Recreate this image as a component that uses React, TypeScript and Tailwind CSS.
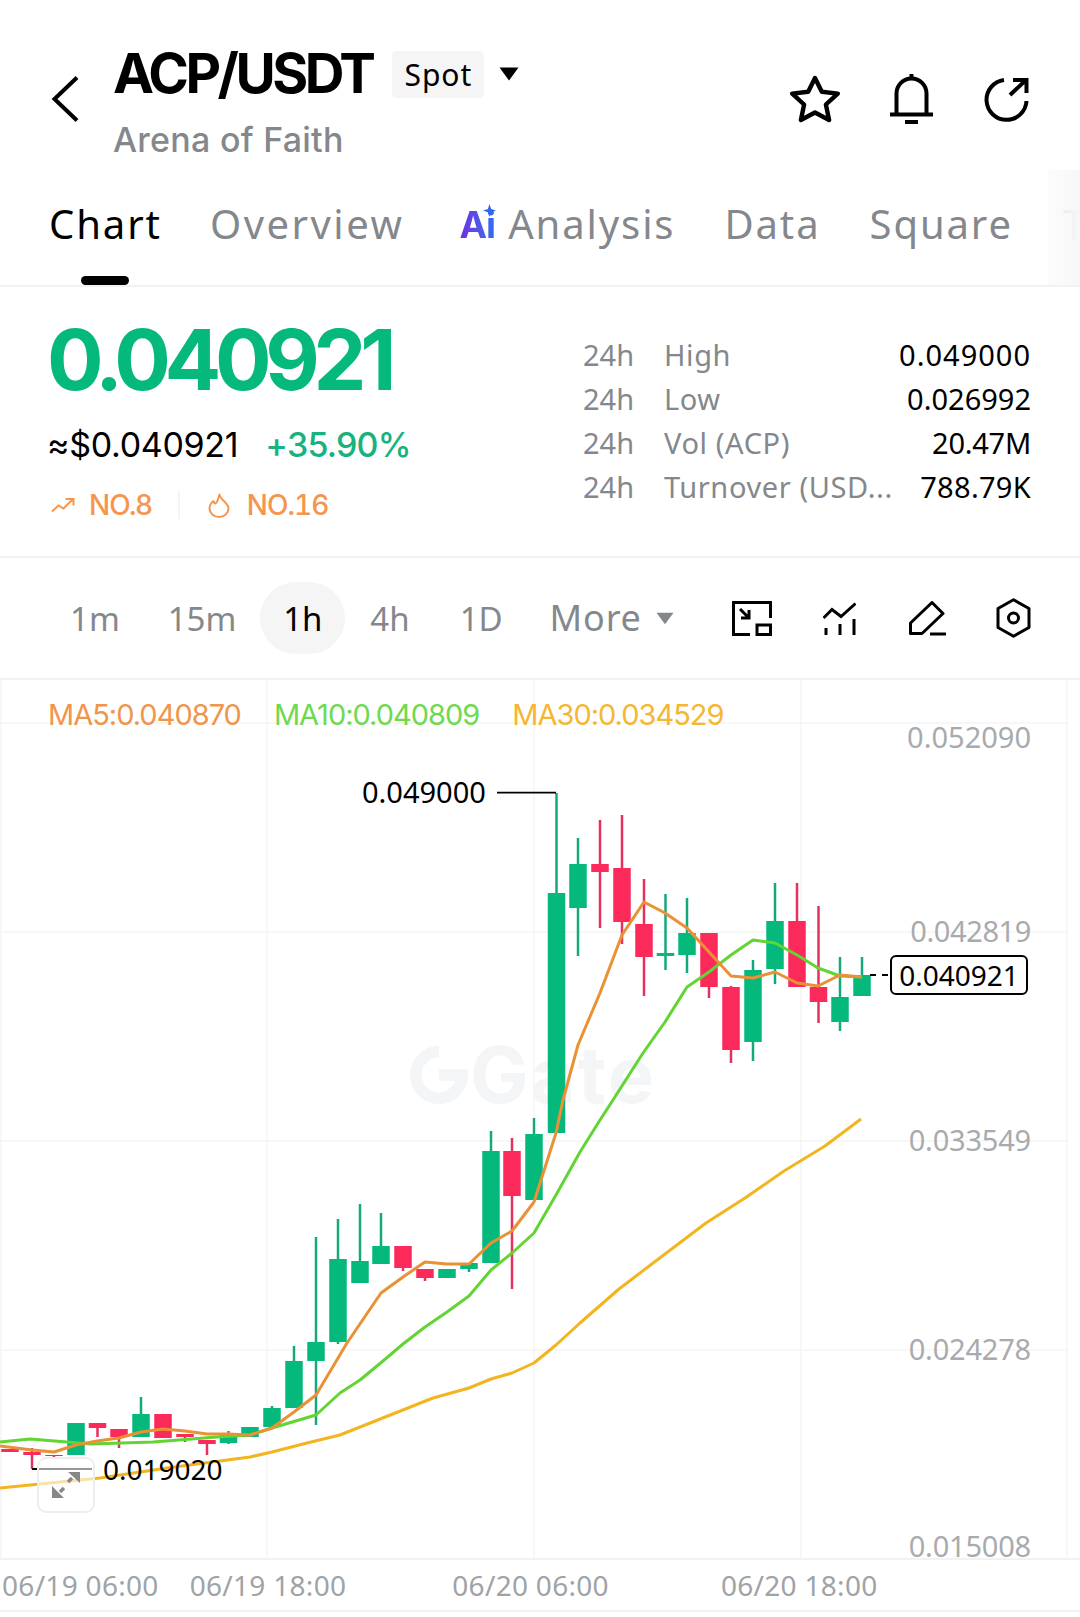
import React from "react";

type C = [number, "g" | "r", number, number, number?, number?];
const candles: C[] = [
  [10, "r", 1449, 1452],
  [32, "r", 1452, 1455, 1448, 1469],
  [54, "r", 1455, 1456, 1455, 1459],
  [76, "g", 1423, 1455],
  [97.5, "r", 1423, 1428, 1423, 1437],
  [119, "r", 1429, 1437, 1429, 1448],
  [141, "g", 1414, 1437, 1397, 1437],
  [163, "r", 1414, 1438],
  [185, "r", 1434, 1437, 1434, 1442],
  [207, "r", 1440, 1444, 1440, 1455],
  [228.5, "g", 1434, 1443, 1431, 1444],
  [250, "g", 1427, 1437],
  [272, "g", 1408, 1427, 1406, 1427],
  [294, "g", 1361, 1408, 1346, 1408],
  [316, "g", 1342, 1361, 1237, 1425],
  [338, "g", 1259, 1342, 1219, 1344],
  [360, "g", 1261, 1283, 1204, 1283],
  [381, "g", 1246, 1264, 1213, 1264],
  [403, "r", 1246, 1268, 1246, 1271],
  [425, "r", 1269, 1278, 1269, 1281],
  [447, "g", 1269, 1278],
  [469, "g", 1263, 1269, 1263, 1272],
  [491, "g", 1151, 1263, 1131, 1263],
  [512, "r", 1151, 1196, 1138, 1289],
  [534, "g", 1134, 1200, 1118, 1200],
  [556.5, "g", 893, 1133, 793, 1133],
  [578, "g", 864, 908, 838, 956],
  [600, "r", 864, 872, 820, 928],
  [622, "r", 868, 922, 815, 944],
  [644, "r", 924, 957, 879, 996],
  [665.5, "g", 953, 956, 894, 970],
  [687, "g", 933, 955, 898, 973],
  [709, "r", 933, 987, 933, 998],
  [731, "r", 987, 1050, 986, 1063],
  [753, "g", 970, 1042, 960, 1061],
  [775, "g", 921, 969, 883, 984],
  [797, "r", 921, 987, 883, 987],
  [818.5, "r", 987, 1002, 906, 1023],
  [840, "g", 997, 1022, 957, 1031],
  [862, "g", 975, 996, 957, 996],
];

const ma5 =
  "0,1446 32,1450 54,1452 76,1445 97,1441 119,1438 141,1432 163,1429 185,1431 207,1434 228,1434 250,1435 272,1428 294,1412 316,1395 347,1343 381,1293 403,1277 425,1262 447,1264 469,1264 491,1243 512,1231 534,1202 556,1133 563,1100 578,1045 600,993 622,935 644,902 665,913 687,928 709,952 731,976 753,978 775,972 797,983 818,986 840,975 862,977";
const ma10 =
  "0,1442 30,1439 67,1442 90,1444 153,1442 217,1437 250,1435 272,1428 316,1415 340,1393 360,1380 383,1361 403,1344 425,1327 447,1312 469,1296 491,1270 512,1253 534,1233 556,1195 580,1152 600,1120 613,1100 643,1053 665,1022 687,987 709,972 731,955 753,940 775,943 797,955 818,968 840,976 862,977";
const ma30 =
  "0,1488 50,1483 100,1478 167,1468 250,1457 272,1452 307,1443 340,1435 433,1398 469,1388 491,1379 512,1373 534,1363 556,1345 580,1323 619,1289 665,1254 706,1223 745,1198 784,1171 825,1146 861,1119";

const Tri = ({ cls, color }: { cls: string; color: string }) => (
  <svg viewBox="0 0 20 14" className={cls}>
    <path d="M0.5 0.5H19.5L10 13.5Z" fill={color} />
  </svg>
);

const Stat = ({ label, value, valueCls }: { label: string; value: string; valueCls: string }) => (
  <div className="flex h-[44px] items-center text-[29px] tracking-[0.6px]">
    <span className="w-[81px] tracking-[0px] text-[#84888c]">24h</span>
    <span className="flex-1 whitespace-nowrap text-[#84888c]">{label}</span>
    <span className={`text-black ${valueCls}`}>{value}</span>
  </div>
);

const Label = ({ cls, children }: { cls: string; children: React.ReactNode }) => (
  <div className={`absolute whitespace-nowrap leading-none ${cls}`}>{children}</div>
);

export default function App() {
  return (
    <div className="flex h-[1617px] w-[1080px] flex-col overflow-hidden bg-white font-['Noto_Sans',sans-serif]">
      {/* Header */}
      <header className="flex h-[170px] shrink-0 items-start">
        <svg viewBox="0 0 28 48" className="ml-[51px] mt-[75px] h-[48px] w-[28px] shrink-0">
          <path d="M26 2.5L3.5 24L26 45.5" fill="none" stroke="#000" strokeWidth="4" />
        </svg>
        <div className="ml-[34px] flex flex-col">
          <div className="mt-[40px] flex items-start">
            <span className="font-['Inter'] text-[55px] font-bold leading-[66px] tracking-[-3.5px] text-black">ACP/USDT</span>
            <span className="ml-[20px] mt-[11px] flex h-[47px] w-[92px] items-center justify-center rounded-[5px] bg-[#f5f5f5] text-[30px] leading-none tracking-[1px] text-black">Spot</span>
            <Tri cls="ml-[15px] mt-[27px] h-[14px] w-[20px]" color="#000" />
          </div>
          <div className="mt-[12px] font-['Inter'] text-[34px] font-medium leading-[44px] tracking-[0.25px] text-[#84888c]">Arena of Faith</div>
        </div>
        <div className="ml-auto mt-[74px] flex items-center pr-[51px]">
          <svg viewBox="0 0 50 48" className="h-[48px] w-[50px]">
            <polygon points="25,3 31.8,16.7 47.8,18.6 35.9,29.5 39.1,45 25,37.5 10.9,45 14.1,29.5 2.2,18.6 18.2,16.7" fill="none" stroke="#000" strokeWidth="4.4" strokeLinejoin="round" />
          </svg>
          <svg viewBox="0 0 43 50" className="ml-[50px] h-[50px] w-[43px]">
            <path d="M6.5 40V19.5a15 15 0 0 1 30 0V40" fill="none" stroke="#000" strokeWidth="4" />
            <path d="M0 40.5H43" stroke="#000" strokeWidth="4" />
            <rect x="19.5" y="0" width="4" height="5" fill="#000" />
            <rect x="15" y="46" width="13" height="4" fill="#000" />
          </svg>
          <svg viewBox="0 0 45 45" className="ml-[51px] h-[45px] w-[45px]">
            <path d="M20 3A20 20 0 1 0 42.5 24" fill="none" stroke="#000" strokeWidth="4" />
            <path d="M26 18L42 3M29 3H42.5V16" fill="none" stroke="#000" strokeWidth="4" />
          </svg>
        </div>
      </header>

      {/* Tabs */}
      <nav className="relative flex h-[117px] shrink-0 overflow-hidden border-b-2 border-[#f2f2f2] text-[40px] leading-none text-[#84888c]">
        <div className="ml-[49px] mt-[28px] flex h-[52px] items-center whitespace-nowrap tracking-[1.9px]">
          <span className="text-black">Chart</span>
          <span className="ml-[48px] tracking-[2.5px]">Overview</span>
          <span className="relative ml-[55px] font-['Inter'] text-[37px] font-bold tracking-[-1px]">
            <span className="bg-gradient-to-r from-[#6a2be0] to-[#2d6df0] bg-clip-text text-transparent">Ai</span>
            <svg viewBox="0 0 12 12" className="absolute left-[24px] top-[-2px] h-[13px] w-[13px]">
              <path d="M6 0L7.5 4.5L12 6L7.5 7.5L6 12L4.5 7.5L0 6L4.5 4.5Z" fill="#2f66f0" />
            </svg>
          </span>
          <span className="ml-[13px]">Analysis</span>
          <span className="ml-[49px]">Data</span>
          <span className="ml-[49px]">Square</span>
          <span className="ml-[50px]">T</span>
        </div>
        <div className="absolute bottom-0 left-[81px] h-[9px] w-[48px] rounded-full bg-black" />
        <div className="absolute bottom-0 right-0 top-0 w-[32px] bg-gradient-to-r from-[#fbfbfb]/80 to-[#f7f7f7]" />
      </nav>

      {/* Ticker */}
      <section className="flex h-[271px] shrink-0 border-b-2 border-[#f2f2f2]">
        <div className="ml-[47px] flex w-[501px] flex-col">
          <div className="mt-[26px] font-['Inter'] text-[84px] font-bold leading-[94px] tracking-[-6.3px] text-[#05b87c]">0.040921</div>
          <div className="mt-[16px] flex items-baseline text-[34px] leading-[44px]">
            <span className="font-['Inter'] tracking-[-0.3px] text-black">≈$0.040921</span>
            <span className="ml-[27px] font-['Inter'] font-medium tracking-[-0.8px] text-[#16b37e]">+35.90%</span>
          </div>
          <div className="mt-[18px] flex items-center font-['Inter'] text-[28px] font-medium leading-[40px] tracking-[-1px] text-[#f5964f]">
            <svg viewBox="0 0 24 16" className="ml-[4px] h-[16px] w-[24px]">
              <path d="M1 14.5L7.5 8.5L12.5 11.5L21.5 2.5M14.5 2H22.5V8.5" fill="none" stroke="#f5964f" strokeWidth="2" />
            </svg>
            <span className="ml-[14px]">NO.8</span>
            <span className="ml-[26px] h-[28px] w-[2px] bg-[#f4f4f4]" />
            <svg viewBox="0 0 22 25" className="ml-[28px] h-[25px] w-[22px]">
              <path d="M11.5 1.5C12 7 20.5 9.5 20.5 15.5A9.5 8.5 0 0 1 1.5 15.5C1.5 12 3.5 9.5 5.5 8C6 10.5 7.5 11 8.5 9.5C10 7.5 10.5 4.5 11.5 1.5Z" fill="none" stroke="#f5964f" strokeWidth="2" strokeLinejoin="round" />
            </svg>
            <span className="ml-[17px] tabular-nums">NO.16</span>
          </div>
        </div>
        <div className="ml-[35px] mt-[46px] w-[448px]">
          <Stat label="High" value="0.049000" valueCls="tracking-[1px]" />
          <Stat label="Low" value="0.026992" valueCls="tracking-[0px]" />
          <Stat label="Vol (ACP)" value="20.47M" valueCls="tracking-[-0.25px]" />
          <Stat label="Turnover (USD..." value="788.79K" valueCls="tracking-[0.3px]" />
        </div>
      </section>

      {/* Toolbar */}
      <div className="flex h-[122px] shrink-0 items-center border-b-2 border-[#f2f2f2] text-[33px] leading-none text-[#84888c]">
        <span className="ml-[70px]">1m</span>
        <span className="ml-[48px]">15m</span>
        <span className="ml-[24px] flex h-[72px] w-[85px] items-center justify-center rounded-full bg-[#f5f5f5] text-black">1h</span>
        <span className="ml-[25px]">4h</span>
        <span className="ml-[50px]">1D</span>
        <span className="ml-[47px] text-[36px] tracking-[0.8px]">More</span>
        <Tri cls="ml-[14px] h-[13px] w-[18px]" color="#84888c" />
        <svg viewBox="0 0 40 35" className="ml-[58px] h-[35px] w-[40px]">
          <path d="M18 33.5H1.5V1.5H38.5V17" fill="none" stroke="#000" strokeWidth="3" />
          <rect x="25" y="24" width="13.5" height="9.5" fill="none" stroke="#000" strokeWidth="3" />
          <path d="M8 8L17 17M17 9V17H9" fill="none" stroke="#000" strokeWidth="3" />
        </svg>
        <svg viewBox="0 0 33 33" className="ml-[51px] h-[33px] w-[33px]">
          <path d="M0.5 16L9 7.5L18 14.5L32.5 1.5" fill="none" stroke="#000" strokeWidth="3" />
          <path d="M3 26V33M17 22V33M31 17V33" fill="none" stroke="#000" strokeWidth="3" />
        </svg>
        <svg viewBox="0 0 37 35" className="ml-[53px] h-[35px] w-[37px]">
          <path d="M1.5 32.5V22L23 1.5L34 12.5L13 32.5Z" fill="none" stroke="#000" strokeWidth="3" strokeLinejoin="round" />
          <path d="M21 33H37" stroke="#000" strokeWidth="3" />
        </svg>
        <svg viewBox="0 0 35 40" className="ml-[50px] h-[40px] w-[35px]">
          <path d="M17.5 1.8L33 10.5V29.5L17.5 38.2L2 29.5V10.5Z" fill="none" stroke="#000" strokeWidth="3" strokeLinejoin="round" />
          <circle cx="17.5" cy="20" r="5" fill="none" stroke="#000" strokeWidth="3" />
        </svg>
      </div>

      {/* Chart */}
      <div className="relative h-[880px] shrink-0 border-b-2 border-[#f2f2f2]">
        <div className="absolute left-[410px] top-[356px] flex items-center font-['Inter'] text-[78px] font-bold leading-none tracking-[2px] text-[#f3f5f6]">
          <svg viewBox="0 0 60 60" className="h-[58px] w-[58px]">
            <path d="M30 6A24 24 0 1 0 54 30H30" fill="none" stroke="#f3f5f6" strokeWidth="12" />
          </svg>
          <span className="ml-[2px]">Gate</span>
        </div>
        <svg viewBox="0 680 1080 880" className="absolute left-0 top-0 h-[880px] w-[1080px]">
          {[723, 932, 1141, 1350].map((y) => (
            <line key={y} x1="0" x2="1068" y1={y} y2={y} stroke="#f5f5f5" strokeWidth="1.5" />
          ))}
          {[1, 267, 534, 801, 1067].map((x) => (
            <line key={x} x1={x} x2={x} y1="680" y2="1559" stroke="#f5f5f5" strokeWidth="1.5" />
          ))}
          {candles.map(([x, c, t, b, wt, wb], i) => {
            const fill = c === "g" ? "#05b87c" : "#fc2a5b";
            const wick = c === "g" ? "#14a97c" : "#e6305f";
            return (
              <g key={i}>
                {wt !== undefined && <rect x={x - 1.25} y={wt} width="2.5" height={(wb as number) - wt} fill={wick} />}
                <rect x={x - 8.75} y={t} width="17.5" height={b - t} fill={fill} />
              </g>
            );
          })}
          <polyline points={ma30} fill="none" stroke="#f2b51f" strokeWidth="3" strokeLinejoin="round" />
          <polyline points={ma10} fill="none" stroke="#62d433" strokeWidth="3" strokeLinejoin="round" />
          <polyline points={ma5} fill="none" stroke="#ea9136" strokeWidth="3" strokeLinejoin="round" />
          <path d="M497 792.7H556" stroke="#000" strokeWidth="1.8" />
          <path d="M32 1469H92" stroke="#000" strokeWidth="1.8" />
          <path d="M870 975H876M882 975H888" stroke="#000" strokeWidth="2" />
        </svg>

        <Label cls="left-[48px] top-[20px] flex gap-[33px] font-['Inter'] text-[29px] tracking-[-1px]">
          <span className="text-[#f0964c]">MA5:0.040870</span>
          <span className="text-[#6fd94f]">MA10:0.040809</span>
          <span className="text-[#f5b731]">MA30:0.034529</span>
        </Label>

        <Label cls="right-[49px] top-[42px] text-[29px] text-[#a8abae]">0.052090</Label>
        <Label cls="right-[49px] top-[236px] text-[29px] tracking-[-0.4px] text-[#a8abae]">0.042819</Label>
        <Label cls="right-[49px] top-[445px] text-[29px] tracking-[-0.2px] text-[#a8abae]">0.033549</Label>
        <Label cls="right-[49px] top-[654px] text-[29px] tracking-[-0.2px] text-[#a8abae]">0.024278</Label>
        <Label cls="right-[49px] top-[851px] text-[29px] tracking-[-0.2px] text-[#a8abae]">0.015008</Label>

        <Label cls="left-[362px] top-[97px] text-[29px] text-black">0.049000</Label>
        <Label cls="left-[103px] top-[775px] text-[28px] text-black">0.019020</Label>

        <div className="absolute left-[890px] top-[275px] flex h-[40px] w-[138px] items-center justify-center rounded-[6px] border-2 border-black bg-white text-[28px] leading-none text-black">0.040921</div>

        <div className="absolute left-[37px] top-[777px] flex h-[56px] w-[58px] items-center justify-center rounded-[9px] border-2 border-[#eeeeee] bg-white/60">
          <svg viewBox="0 0 30 28" className="h-[28px] w-[30px]">
            <path d="M17 1H29V12Z M1 15V27H13Z" fill="#888" />
            <path d="M21 7L17 11M9 21L13 17" stroke="#888" strokeWidth="3.5" />
          </svg>
        </div>
      </div>

      {/* Dates */}
      <div className="flex h-[52px] shrink-0 items-center border-b-2 border-[#f2f2f2] text-[28px] leading-none tracking-[0.3px] text-[#a0a3a6]">
        <span className="ml-[2px] whitespace-nowrap">06/19 06:00</span>
        <span className="ml-[31px] whitespace-nowrap">06/19 18:00</span>
        <span className="ml-[106px] whitespace-nowrap">06/20 06:00</span>
        <span className="ml-[112px] whitespace-nowrap">06/20 18:00</span>
      </div>
    </div>
  );
}
